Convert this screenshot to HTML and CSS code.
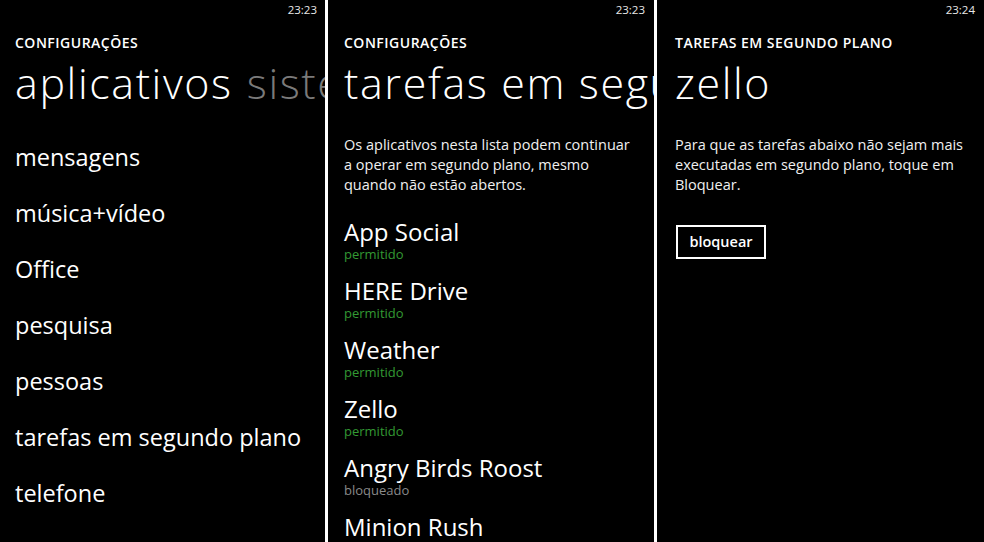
FILE: index.html
```html
<!DOCTYPE html>
<html lang="pt-BR">
<head>
<meta charset="utf-8">
<title>Tarefas em segundo plano</title>
<link rel="stylesheet" href="styles.css">
</head>
<body>
<div class="strip">
  <section class="screen s1">
    <div class="status">23:23</div>
    <div class="app-title">CONFIGURAÇÕES</div>
    <div class="pivot"><span>aplicativos</span><span class="dim">sistema</span></div>
    <ul class="menu">
      <li>mensagens</li>
      <li>música+vídeo</li>
      <li>Office</li>
      <li>pesquisa</li>
      <li>pessoas</li>
      <li>tarefas em segundo plano</li>
      <li>telefone</li>
    </ul>
  </section>
  <div class="sep"></div>
  <section class="screen s2">
    <div class="status">23:23</div>
    <div class="app-title">CONFIGURAÇÕES</div>
    <div class="pivot">tarefas em segundo plano</div>
    <p class="desc">Os aplicativos nesta lista podem continuar<br>a operar em segundo plano, mesmo<br>quando não estão abertos.</p>
    <ul class="apps">
      <li><span class="name">App Social</span><span class="state ok">permitido</span></li>
      <li><span class="name">HERE Drive</span><span class="state ok">permitido</span></li>
      <li><span class="name">Weather</span><span class="state ok">permitido</span></li>
      <li><span class="name">Zello</span><span class="state ok">permitido</span></li>
      <li><span class="name">Angry Birds Roost</span><span class="state off">bloqueado</span></li>
      <li><span class="name">Minion Rush</span><span class="state ok">permitido</span></li>
    </ul>
  </section>
  <div class="sep"></div>
  <section class="screen s3">
    <div class="status">23:24</div>
    <div class="app-title">TAREFAS EM SEGUNDO PLANO</div>
    <div class="pivot">zello</div>
    <p class="desc">Para que as tarefas abaixo não sejam mais executadas em segundo plano, toque em Bloquear.</p>
    <button class="btn" type="button">bloquear</button>
  </section>
</div>
</body>
</html>
```

FILE: styles.css
```css
* { box-sizing: border-box; }
html, body {
  margin: 0;
  padding: 0;
  background: #000;
}
body {
  width: 984px;
  height: 542px;
  overflow: hidden;
  font-family: "Open Sans", "Noto Sans", "Liberation Sans", sans-serif;
  color: #fff;
}
.strip {
  display: flex;
  height: 542px;
}
.screen {
  flex: none;
  height: 542px;
  overflow: hidden;
  background: #000;
}
.s1 { width: 325px; padding-left: 15px; }
.s2 { width: 326px; padding-left: 16px; }
.s3 { width: 327px; padding-left: 18px; }
.sep {
  flex: none;
  width: 3px;
  background: #fff;
}
.status {
  height: 19px;
  padding-top: 3px;
  padding-right: 8px;
  text-align: right;
  font-size: 11.5px;
  line-height: 14px;
  color: #e8e8e8;
}
.s2 .status { padding-right: 9px; }
.s3 .status { padding-right: 9px; }
.app-title {
  margin-top: 15px;
  font-size: 14px;
  font-weight: 600;
  line-height: 18px;
  letter-spacing: 0.5px;
}
.pivot {
  margin-top: 6px;
  height: 50px;
  font-size: 43px;
  font-weight: 300;
  line-height: 50px;
  white-space: nowrap;
  letter-spacing: 1.6px;
}
.pivot .dim { color: #7a7a7a; margin-left: 14px; }
.menu {
  list-style: none;
  margin: 21px 0 0;
  padding: 0;
}
.menu li {
  font-size: 23.5px;
  line-height: 56px;
  height: 56px;
  white-space: nowrap;
}
.desc {
  margin: 27px 0 0;
  padding-right: 18px;
  font-size: 14.5px;
  line-height: 20px;
  color: #f0f0f0;
}
.apps {
  list-style: none;
  margin: 22px 0 0;
  padding: 0;
}
.apps li {
  display: flex;
  flex-direction: column;
  height: 59px;
}
.apps .name {
  font-size: 24px;
  line-height: 30px;
  white-space: nowrap;
}
.apps .state {
  font-size: 13px;
  line-height: 16px;
  margin-top: -1px;
}
.state.ok { color: #339933; }
.state.off { color: #8a8a8a; }
.btn {
  display: block;
  margin-top: 30px;
  margin-left: 1px;
  width: 90px;
  height: 34px;
  background: #000;
  color: #fff;
  border: 2px solid #fff;
  font-family: inherit;
  font-size: 14.5px;
  font-weight: 600;
  padding: 0 0 2px;
}
```
